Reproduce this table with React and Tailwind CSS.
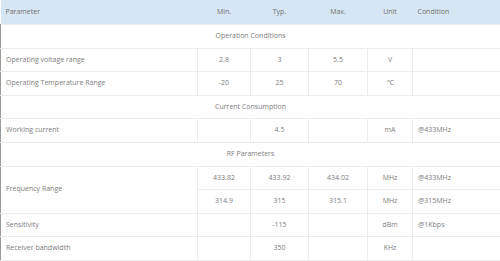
const rows = [
  { section: "Operation Conditions" },
  { name: "Operating voltage range", min: "2.8", typ: "3", max: "5.5", unit: "V", cond: "" },
  { name: "Operating Temperature Range", min: "-20", typ: "25", max: "70", unit: "℃", cond: "" },
  { section: "Current Consumption" },
  { name: "Working current", min: "", typ: "4.5", max: "", unit: "mA", cond: "@433MHz" },
  { section: "RF Parameters" },
  { name: "Frequency Range", span: 2, min: "433.82", typ: "433.92", max: "434.02", unit: "MHz", cond: "@433MHz" },
  { skipName: true, min: "314.9", typ: "315", max: "315.1", unit: "MHz", cond: "@315MHz" },
  { name: "Sensitivity", min: "", typ: "-115", max: "", unit: "dBm", cond: "@1Kbps" },
  { name: "Receiver bandwidth", min: "", typ: "350", max: "", unit: "KHz", cond: "" },
];

const cell = "border border-[#ececec] text-center h-[23.6px] p-0";

export default function App() {
  return (
    <div className="w-[500px] h-[261px] bg-white overflow-hidden font-['Open_Sans',sans-serif] text-[7px] text-[#7d7d7d]">
      <table className="w-full table-fixed border-collapse">
        <colgroup>
          <col className="w-[197px]" />
          <col className="w-[53px]" />
          <col className="w-[58px]" />
          <col className="w-[59px]" />
          <col className="w-[45px]" />
          <col />
        </colgroup>
        <thead>
          <tr className="bg-[#d6e6f3] text-[#717171] h-[24.5px]">
            <th className="font-normal text-left pl-[5px]">Parameter</th>
            <th className="font-normal">Min.</th>
            <th className="font-normal">Typ.</th>
            <th className="font-normal">Max.</th>
            <th className="font-normal">Unit</th>
            <th className="font-normal text-left pl-[5px]">Condition</th>
          </tr>
        </thead>
        <tbody>
          {rows.map((r, i) =>
            r.section ? (
              <tr key={i}>
                <td colSpan={6} className="border-t border-b border-l border-[#ececec] border-l-[#9a9a9a] text-center h-[23.6px]">
                  {r.section}
                </td>
              </tr>
            ) : (
              <tr key={i}>
                {!r.skipName && (
                  <td
                    rowSpan={r.span || 1}
                    className="border-t border-b border-r border-[#ececec] border-l border-l-[#9a9a9a] text-left pl-[5px] h-[23.6px]"
                  >
                    {r.name}
                  </td>
                )}
                <td className={cell}>{r.min}</td>
                <td className={cell}>{r.typ}</td>
                <td className={cell}>{r.max}</td>
                <td className={cell}>{r.unit}</td>
                <td className="border-t border-b border-l border-[#ececec] text-left pl-[5px] h-[23.6px]">{r.cond}</td>
              </tr>
            )
          )}
        </tbody>
      </table>
    </div>
  );
}
